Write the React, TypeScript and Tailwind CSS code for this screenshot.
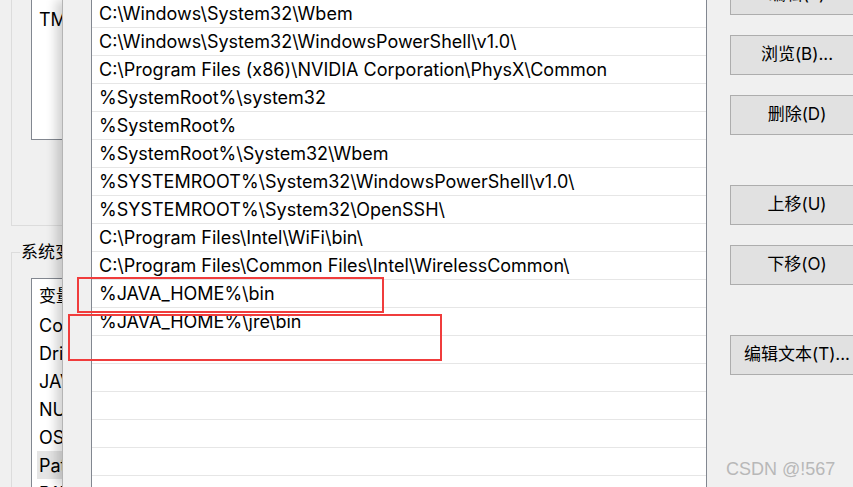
import React from "react";

const paths = [
  "C:\\Windows\\System32\\Wbem",
  "C:\\Windows\\System32\\WindowsPowerShell\\v1.0\\",
  "C:\\Program Files (x86)\\NVIDIA Corporation\\PhysX\\Common",
  "%SystemRoot%\\system32",
  "%SystemRoot%",
  "%SystemRoot%\\System32\\Wbem",
  "%SYSTEMROOT%\\System32\\WindowsPowerShell\\v1.0\\",
  "%SYSTEMROOT%\\System32\\OpenSSH\\",
  "C:\\Program Files\\Intel\\WiFi\\bin\\",
  "C:\\Program Files\\Common Files\\Intel\\WirelessCommon\\",
  "%JAVA_HOME%\\bin",
  "%JAVA_HOME%\\jre\\bin",
  "", "", "", "", "", "",
];

const vars = ["ComSpec", "DriverData", "JAVA_HOME", "NUMBER_OF_PROCESSORS", "OS", "Path", "PATHEXT"];

function Btn({ label, className }: { label: string; className: string }) {
  return (
    <div
      className={
        "w-[134px] h-[40px] shrink-0 border border-[#adadad] bg-[#e1e1e1] flex items-center justify-center text-[17px] text-black " +
        className
      }
    >
      {label}
    </div>
  );
}

export default function App() {
  return (
    <div className="relative w-[853px] h-[487px] overflow-hidden bg-[#f0f0f0] text-black text-[18px] font-['Inter','Noto_Sans_CJK_SC',sans-serif]">
      {/* background window */}
      <div className="pl-[11px] flex flex-col">
        <div className="h-[226px] w-[400px] border-l border-b border-[#dcdcdc] pl-[19px]">
          <div className="h-[140px] w-[300px] bg-white border-l border-b border-[#828790] pl-[7px] pt-[8px] leading-[24px]">
            TMP
          </div>
        </div>
        <fieldset className="mt-[17px] w-[400px] h-[300px] border-t border-l border-[#dcdcdc]">
          <legend className="ml-[8px] px-[1px] leading-[18px] text-[17px]">系统变量(S)</legend>
          <div className="mt-[17px] ml-[19px] w-[300px] h-[300px] bg-white border-l border-t border-[#828790] pt-[4px]">
            <div className="h-[28px] flex items-center pl-[7px] text-[17px]">变量</div>
            {vars.map((v) => (
              <div
                key={v}
                className={
                  "h-[28px] flex items-center ml-[5px] pl-[2px] " + (v === "Path" ? "bg-[#e5e5e5]" : "")
                }
              >
                {v}
              </div>
            ))}
          </div>
        </fieldset>
      </div>

      {/* foreground dialog */}
      <div className="absolute left-[62px] top-0 right-0 bottom-0 bg-[#f0f0f0] border-l border-[#b4b4b4] shadow-[-6px_0_10px_rgba(0,0,0,0.18)] flex pl-[28px]">
        <div className="w-[616px] h-full shrink-0 bg-white border-l border-r border-[#828790] flex flex-col">
          {paths.map((p, i) => (
            <div
              key={i}
              className="h-[28px] shrink-0 border-b border-[#e6e6e6] pl-[7px] flex items-center leading-none whitespace-nowrap"
            >
              {p}
            </div>
          ))}
        </div>
        <div className="pl-[23px] flex flex-col">
          <Btn label="编辑(E)" className="mt-[-25px]" />
          <Btn label="浏览(B)..." className="mt-[20px]" />
          <Btn label="删除(D)" className="mt-[20px]" />
          <Btn label="上移(U)" className="mt-[50px]" />
          <Btn label="下移(O)" className="mt-[20px]" />
          <Btn label="编辑文本(T)..." className="mt-[50px]" />
        </div>
      </div>

      {/* red annotation boxes */}
      <div className="absolute left-[77px] top-[277px] w-[307px] h-[36px] border-2 border-[#f03c3c]" />
      <div className="absolute left-[68px] top-[314px] w-[374px] h-[47px] border-2 border-[#f03c3c]" />

      {/* watermark */}
      <div className="absolute left-[726px] top-[458px] text-[18px] leading-[22px] text-[#b8b8b8] font-['Liberation_Sans',sans-serif]">
        CSDN @!567
      </div>
    </div>
  );
}
